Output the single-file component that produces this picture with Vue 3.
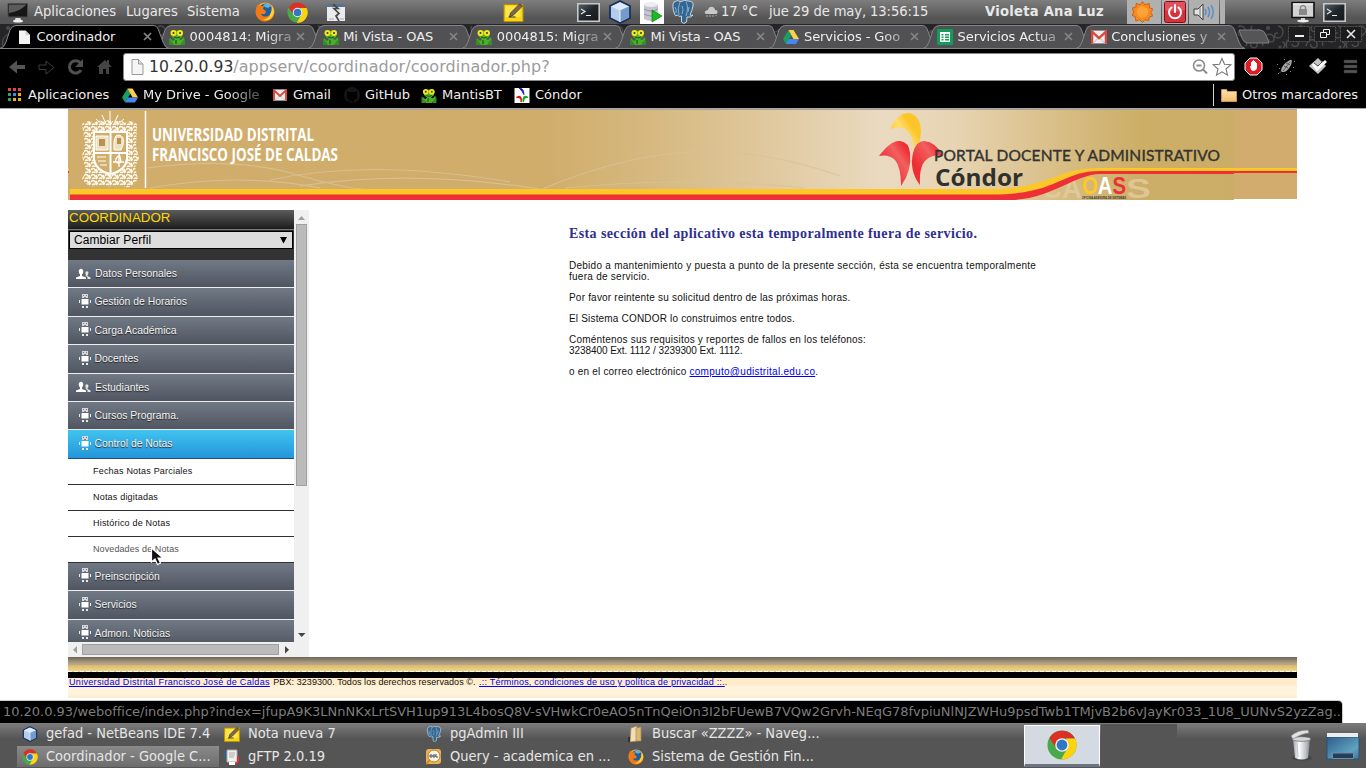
<script setup>
const tabs = [
  { icon: 'page', title: 'Coordinador', active: true },
  { icon: 'mantis', title: '0004814: Migra' , fade: true },
  { icon: 'mantis', title: 'Mi Vista - OAS' },
  { icon: 'mantis', title: '0004815: Migra', fade: true },
  { icon: 'mantis', title: 'Mi Vista - OAS' },
  { icon: 'drive', title: 'Servicios - Goo', fade: true },
  { icon: 'sheet', title: 'Servicios Actua', fade: true },
  { icon: 'gmail', title: 'Conclusiones y', fade: true },
]
const bookmarks = [
  { icon: 'apps', label: 'Aplicaciones', cls: 'b-apps' },
  { icon: 'drive', label: 'My Drive - Google', cls: 'b-drive', fade: true },
  { icon: 'gmail', label: 'Gmail', cls: 'b-gmail' },
  { icon: 'github', label: 'GitHub', cls: 'b-github' },
  { icon: 'mantis', label: 'MantisBT', cls: 'b-mantis' },
  { icon: 'condor', label: 'Cóndor', cls: 'b-condor' },
]
const menu = [
  { icon: 'people', label: 'Datos Personales' },
  { icon: 'robot', label: 'Gestión de Horarios' },
  { icon: 'robot', label: 'Carga Académica' },
  { icon: 'robot', label: 'Docentes' },
  { icon: 'people', label: 'Estudiantes' },
  { icon: 'robot', label: 'Cursos Programa.' },
  {
    icon: 'robot', label: 'Control de Notas', open: true,
    children: ['Fechas Notas Parciales', 'Notas digitadas', 'Histórico de Notas', 'Novedades de Notas'],
  },
  { icon: 'robot', label: 'Preinscripción' },
  { icon: 'robot', label: 'Servicios' },
  { icon: 'robot', label: 'Admon. Noticias' },
]
const tasks = [
  { icon: 'cube', label: 'gefad - NetBeans IDE 7.4' },
  { icon: 'note', label: 'Nota nueva 7' },
  { icon: 'elephant', label: 'pgAdmin III' },
  { icon: 'files', label: 'Buscar «ZZZZ» - Naveg...' },
  { icon: 'chrome', label: 'Coordinador - Google C...', active: true },
  { icon: 'gftp', label: 'gFTP 2.0.19' },
  { icon: 'sql', label: 'Query - academica en ...' },
  { icon: 'firefox', label: 'Sistema de Gestión Fin...' },
]
</script>

<template>
  <div class="screen">
    <svg class="defs" width="0" height="0" aria-hidden="true">
      <defs>
        <linearGradient id="g-fox" x1="0" y1="0" x2="0" y2="1"><stop offset="0" stop-color="#ffb52e" /><stop offset="1" stop-color="#e2510c" /></linearGradient>
        <linearGradient id="g-term" x1="0" y1="0" x2="1" y2="1"><stop offset="0" stop-color="#5a6269" /><stop offset=".5" stop-color="#20262b" /><stop offset="1" stop-color="#14181c" /></linearGradient>
        <linearGradient id="g-bin" x1="0" x2="1" y1="0" y2="0"><stop offset="0" stop-color="#9aa0a6" /><stop offset=".35" stop-color="#fff" /><stop offset=".7" stop-color="#c5c9ce" /><stop offset="1" stop-color="#858b92" /></linearGradient>
        <linearGradient id="g-desk" x1="0" x2="1" y1="0" y2="1"><stop offset="0" stop-color="#2c5b8e" /><stop offset=".7" stop-color="#5fa3bd" /><stop offset="1" stop-color="#3c74a2" /></linearGradient>
        <linearGradient id="g-folder" x1="0" x2="0" y1="0" y2="1"><stop offset="0" stop-color="#ffe3ae" /><stop offset="1" stop-color="#f0bd70" /></linearGradient>
        <pattern id="damask" width="60" height="26" patternUnits="userSpaceOnUse">
          <rect width="60" height="26" fill="#252527" />
          <g fill="none" stroke="#4a4a4c" stroke-width="1.4">
            <path d="M3 22C0 12 12 6 14 14c1 5-6 5-5 1M18 2c8 2 5 12 0 12s-4-6 0-5M27 24c-3-8 5-14 10-8s-4 9-5 4M38 3c5-3 10 3 6 7s-8-1-4-3M46 22c2-8 10-8 11-2s-8 4-6 0M52 2c-4 6 6 8 7 3M22 18c3 0 4 4 1 6" />
          </g>
          <g fill="#4a4a4c"><circle cx="8" cy="4" r="2" /><circle cx="31" cy="8" r="2" /><circle cx="50" cy="13" r="1.6" /><circle cx="20" cy="23" r="1.5" /></g>
        </pattern>
      </defs>
      <symbol id="i-monitor" viewBox="0 0 22 22"><path d="M1 2.500h19.500v13.500H1z" fill="#161616" stroke="#4c4c4c" /><path d="M2 3.500h17.500Q14 10 2 12z" fill="#5b5b5b" /><path d="M8.500 17h5l.5 2H8z" fill="#ddd" /><ellipse cx="11" cy="20" rx="5" ry="1.600" fill="#eee" /></symbol>
      <symbol id="i-firefox" viewBox="0 0 20 20"><circle cx="10" cy="10" r="9.500" fill="url(#g-fox)" /><circle cx="10.500" cy="8" r="6.500" fill="#1d5f9f" /><path d="M8 3q5-3 8 1l-3 2-3-1z" fill="#5fb3dd" /><path d="M1 6q1-2 2-4l2 2 4 0-1 3 3 2-1 3-4 0q1 4 6 3 5-2 5-9 4 7-1 11-7 5-12 0Q.5 13 1 6z" fill="#f07a16" /><path d="M17 4q4 6 0 11-3 4-9 3 9-2 9-14z" fill="#ffd23a" /></symbol>
      <symbol id="i-chrome" viewBox="0 0 30 30"><circle cx="15" cy="15" r="14.500" fill="#48a84a" /><path d="M2.500 8A14.500 14.500 0 0 1 28 8.500H15L9 18z" fill="#dc2f25" /><path d="M28 8.500A14.500 14.500 0 0 1 14 29.500L21 17l-2-8.500z" fill="#fdd20f" /><circle cx="15" cy="15" r="6.800" fill="#f1f3f5" /><circle cx="15" cy="15" r="5.400" fill="#2f78c4" /></symbol>
      <symbol id="i-torn" viewBox="0 0 18 17"><path d="M0 0h18v17H0z" fill="#e9ebee" /><path d="M0 0h18v3H0z" fill="#58728f" /><path d="M6 0l5 4.500H7l5 5-3 2.500 3 5" fill="none" stroke="#484848" stroke-width="1.700" /><path d="M2 15h5M13 15h4" stroke="#aaa" /></symbol>
      <symbol id="i-note" viewBox="0 0 20 20"><path d="M.5 2.500h19v17H.5z" fill="#f4d517" stroke="#bd8c00" /><path d="M2 4h15v11H2z" fill="#fbe54d" /><path d="M6 15l1-4 9-9 3 2-9 9z" fill="#7d684d" stroke="#44372a" stroke-width=".8" /><path d="M5 15h7" stroke="#333" /></symbol>
      <symbol id="i-term" viewBox="0 0 23 19"><path d="M.8.8h21.400v17.400H.8z" fill="url(#g-term)" stroke="#c8c8c8" stroke-width="1.600" /><path d="M4 6l4 2.500-4 2.500M9 12.500h5" fill="none" stroke="#e6ecf0" stroke-width="1.100" /></symbol>
      <symbol id="i-cube" viewBox="0 0 24 24"><path d="M12 1l10 5v12l-10 5-10-5V6z" fill="#b4cdeb" stroke="#17305c" stroke-width="1.800" /><path d="M3 6.500l9 4 9-4-9-4z" fill="#dceafa" /><path d="M12 10.500l9-4v11l-9 4.500z" fill="#759bcb" /><path d="M12 10.500V22" stroke="#eef5ff" /></symbol>
      <symbol id="i-db" viewBox="0 0 24 24"><path d="M0 0h24v24H0z" fill="#fff" /><path d="M4 4v15q7 4 14 0V4z" fill="#c4c5d0" /><ellipse cx="11" cy="4.500" rx="7" ry="2.500" fill="#ececf2" /><path d="M4 9q7 4 14 0M4 14q7 4 14 0" fill="none" stroke="#9394a5" /><path d="M12 10l10 6-10 6z" fill="#14bd22" stroke="#087c10" stroke-width=".7" /></symbol>
      <symbol id="i-elephant" viewBox="0 0 22 24"><path d="M2 2Q5-.5 9 1.500 13-.5 16 1q6 0 5 5-1 5-3 9 1 1 3 0-2 3-6 2l-.5 5q-3 3-5 0l0-6q-3 1-3 0l-1-1q-2 2-3-1Q-.5 5 2 2z" fill="#336791" stroke="#d4e2ef" stroke-width=".9" /><path d="M8 2q-3 6-1 13M14 2q3 5 0 14M10 6q2 3 0 8M17 7l-1 5M3 7q2 3 1 6" fill="none" stroke="#8fb4d2" stroke-width=".9" /></symbol>
      <symbol id="i-weather" viewBox="0 0 14 12"><path d="M3 8Q0 8 1 5.500 2 4 4 4q1-4 5-3 2 1 2 3 3 0 2.500 3-.5 1-2 1z" fill="#c9c9c9" /><path d="M3 9v2M6 9v2M9 9v2M12 9v1" stroke="#aaa" /></symbol>
      <symbol id="i-sun" viewBox="0 0 22 22"><path d="M11 0l2.500 3.500L18 2l.3 4.400L22 8l-2.500 3.300L22 15l-4 1.300L17.500 20 13.500 19 11 22l-3-3-4 1.500-.5-4.500L0 14.500 2 11 0 7l4-1.200L4.500 2 8.500 3.500z" fill="#f78b1f" stroke="#d45b05" /><circle cx="11" cy="11" r="6" fill="#ffa23a" /></symbol>
      <symbol id="i-power" viewBox="0 0 22 22"><rect x=".5" y=".5" width="21" height="21" rx="2" fill="#d7313c" stroke="#850c14" /><path d="M1 1h20v8Q11 12 1 9z" fill="#ea6870" opacity=".6" /><path d="M7.500 6.500a6 6 0 1 0 7 0M11 4v7" fill="none" stroke="#fff" stroke-width="2" stroke-linecap="round" /></symbol>
      <symbol id="i-sound" viewBox="0 0 22 20"><path d="M1 7h4l5-5v16l-5-5H1z" fill="#e3e3e3" stroke="#3c3c3c" /><path d="M7 5v10" stroke="#777" /><path d="M12 7q2 3 0 6M15 5q3 5 0 10M18 3q4.500 7 0 14" fill="none" stroke="#5b8fc6" stroke-width="1.500" /></symbol>
      <symbol id="i-lock" viewBox="0 0 24 22"><path d="M1 1.500h22v15H1z" fill="#d3d3d3" stroke="#111" stroke-width="1.600" /><path d="M2 2.500h20v1H2z" fill="#fff" /><path d="M8 8h8v6H8z" fill="#888" /><path d="M9.500 8V6q2.500-3 5 0v2" fill="none" stroke="#888" stroke-width="1.400" /><path d="M10 17h4v2h-4z" fill="#ccc" /><ellipse cx="12" cy="20" rx="6" ry="1.500" fill="#eee" /></symbol>
      <symbol id="i-page" viewBox="0 0 16 16"><path d="M3 1.500h6.500L14 6v9H3z" fill="#f3f3f3" /><path d="M9.500 1.500V6H14" fill="#ccc" /></symbol>
      <symbol id="i-pageline" viewBox="0 0 16 16"><path d="M3 .5h6.500L14 5v10.500H3z" fill="#f5f5f5" stroke="#999" /><path d="M9.500.5V5H14" fill="#e0e0e0" stroke="#999" /></symbol>
      <symbol id="i-mantis" viewBox="0 0 16 16"><path d="M2 4q6-5 12 0l-1 4-3 2 2 1 3-3v5l-4 3H5l-4-3V9l3 3 2-2-3-2z" fill="#4cae2c" /><circle cx="4.500" cy="4" r="3" fill="#f8e71c" /><circle cx="11" cy="4" r="3" fill="#f8e71c" /><circle cx="4.500" cy="4" r="1" fill="#333" /><circle cx="11" cy="4" r="1" fill="#333" /><path d="M5 8q3 2 6 0" fill="none" stroke="#145d10" /><path d="M0 9q2 3 4 5v2H0zM16 9q-2 3-4 5v2h4z" fill="#2f9026" /><path d="M7 11v4" stroke="#145d10" stroke-width="1.200" /></symbol>
      <symbol id="i-drive" viewBox="0 0 16 15"><path d="M5.500.5l3 5-5.500 9L0 9.500z" fill="#18a160" /><path d="M5.500.5h5l5.500 9h-5.500z" fill="#ffcf48" /><path d="M5.800 9.500H16l-3 5H3z" fill="#4687f4" /></symbol>
      <symbol id="i-sheet" viewBox="0 0 16 16"><rect width="16" height="16" rx="1" fill="#109d59" /><path d="M3 3h10v10H3z" fill="#fff" /><path d="M4.500 5h2v1.500h-2zM8 5h4v1.500H8zM4.500 7.500h2V9h-2zM8 7.500h4V9H8zM4.500 10h2v1.500h-2zM8 10h4v1.500H8z" fill="#109d59" /></symbol>
      <symbol id="i-gmail" viewBox="0 0 15 12"><path d="M0 0h15v12H0z" fill="#ededed" /><path d="M2 12l5.500-6 5.500 6" fill="none" stroke="#c9c9c9" /><path d="M1 12V1l6.500 6L14 1v11" fill="none" stroke="#d84a3e" stroke-width="2.200" /></symbol>
      <symbol id="i-apps" viewBox="0 0 14 14"><path d="M0 0h3v3H0zM5 0h3v3H5zM10 0h3v3h-3z" fill="#e8453c" /><path d="M0 5h3v3H0z" fill="#34a853" /><path d="M5 5h3v3H5z" fill="#4285f4" /><path d="M10 5h3v3h-3zM5 10h3v3H5zM10 10h3v3h-3z" fill="#fbab18" /><path d="M0 10h3v3H0z" fill="#34a853" /></symbol>
      <symbol id="i-github" viewBox="0 0 16 16"><circle cx="8" cy="8" r="8" fill="#151515" /><path d="M6 16v-3q-3 0-3-2M10 16v-3q4-1 3-5V4l-2 1H5L3 4v4q-1 4 3 5" fill="#000" /></symbol>
      <symbol id="i-condor" viewBox="0 0 16 16"><path d="M0 0h16v16H0z" fill="#fff" /><path d="M5 0q5 0 5 7Q9 4 5 0z" fill="#1414c8" stroke="#1414c8" /><path d="M7 15q1-6-5-5l3-1q3 1 2 6z" fill="#d11" stroke="#d11" stroke-width="1.500" /><path d="M9.500 15q0-6 5-5l-3-1q-3 1-2 6z" fill="#18a524" stroke="#18a524" stroke-width="1.500" /></symbol>
      <symbol id="i-people" viewBox="0 0 15 12"><path d="M3 2Q5-.5 7 2q.8 3-1 4.500V8l4 1.500V11H0V9.500L4 8V6.500Q2.200 5 3 2z" fill="#fff" /><path d="M9.500 4q1.500-1.500 2.800 0 .5 2-.8 3v1L14.500 9.500V11h-3V9L9.500 8l.5-1Q9 5.500 9.500 4z" fill="#e6e7e9" /></symbol>
      <symbol id="i-robot" viewBox="0 0 12 14"><path d="M3 0h6v4H3z" fill="#d5d8dc" /><path d="M4 1h1v1H4zM7 1h1v1H7zM5 3h2v1H5z" fill="#7c828b" /><path d="M2.500 5h7v5.500h-7z" fill="#fff" /><path d="M0 6h1v3H0zM11 6h1v3h-1zM3 12h2v2H3zM7 12h2v2H7z" fill="#e8eaec" /></symbol>
      <symbol id="i-files" viewBox="0 0 16 16"><path d="M3 2l6-2v15l-7 1z" fill="#f3ddb4" stroke="#a98950" stroke-width=".7" /><path d="M8 2l5-1v14H8z" fill="#dcb876" stroke="#a98950" stroke-width=".7" /><path d="M0 11h2v5H0z" fill="#333" /></symbol>
      <symbol id="i-gftp" viewBox="0 0 16 16"><path d="M3 1h10v12H3z" fill="#f1f1f1" stroke="#aaa" /><path d="M5 4h6M5 6h6M5 8h5" stroke="#aaa" /><path d="M1 2v8" stroke="#395d87" stroke-width="2" /><path d="M14 7v6l-3 2" fill="none" stroke="#d73636" stroke-width="2" /><path d="M5 13h6v3H5z" fill="#fff" /></symbol>
      <symbol id="i-sql" viewBox="0 0 16 16"><rect width="15" height="15" rx="3" fill="#f0b44c" /><circle cx="8" cy="7" r="6" fill="#f6f2e8" stroke="#b58034" /><path d="M4 6h2v2H4zM7 6h2v2H7zM10 5v3h2" fill="none" stroke="#555" /><path d="M4 11l-4 4" stroke="#d88b22" stroke-width="2" /></symbol>
      <symbol id="i-folder" viewBox="0 0 16 13"><path d="M.5.5h5l1 2h9v10H.5z" fill="url(#g-folder)" stroke="#c9974f" /></symbol>
    </svg>

    <header class="panel">
      <svg class="ic p-monitor"><use href="#i-monitor" /></svg>
      <span class="p-m1">Aplicaciones</span><span class="p-m2">Lugares</span><span class="p-m3">Sistema</span>
      <svg class="ic p-fox"><use href="#i-firefox" /></svg>
      <svg class="ic p-chrome"><use href="#i-chrome" /></svg>
      <svg class="ic p-torn"><use href="#i-torn" /></svg>
      <svg class="ic p-note"><use href="#i-note" /></svg>
      <svg class="ic p-term"><use href="#i-term" /></svg>
      <svg class="ic p-cube"><use href="#i-cube" /></svg>
      <svg class="ic p-db"><use href="#i-db" /></svg>
      <svg class="ic p-eleph"><use href="#i-elephant" /></svg>
      <svg class="ic p-weather"><use href="#i-weather" /></svg>
      <span class="p-temp">17 °C</span>
      <span class="p-date">jue 29 de may, 13:56:15</span>
      <b class="p-user">Violeta Ana Luz</b>
      <div class="tray">
        <i><svg class="ic t-sun"><use href="#i-sun" /></svg></i>
        <i><svg class="ic t-pow"><use href="#i-power" /></svg></i>
        <i><svg class="ic t-snd"><use href="#i-sound" /></svg></i>
        <i></i>
      </div>
      <svg class="ic p-lock"><use href="#i-lock" /></svg>
      <svg class="ic p-term2"><use href="#i-term" /></svg>
    </header>

    <div class="strip">
      <svg class="damask"><rect width="1366" height="25" fill="url(#damask)" /></svg>
      <div v-for="(t, i) in tabs" :key="i" class="tab" :class="{ active: t.active }">
        <svg class="shape" width="172" height="25" viewBox="0 0 172 25">
          <path d="M0 24.500Q4 24 6 18L10 6Q12 1.500 16 1.500H153Q157 1.500 158.500 6L163 18Q165 24 169 24.500z" />
        </svg>
        <svg class="fav"><use :href="'#i-' + t.icon" /></svg>
        <span class="title" :class="{ fade: t.fade }">{{ t.title }}</span>
        <svg class="x" viewBox="0 0 9 9"><path d="M1 1l7 7M8 1l-7 7" /></svg>
      </div>
      <svg class="newtab" width="32" height="15" viewBox="0 0 32 15"><path d="M1 1h21q4 0 6 5l3 8H9q-3 0-5-5z" fill="#555557" stroke="#808082" /></svg>
      <div class="wins">
        <svg viewBox="0 0 22 16"><path class="fr" d="M.5.500h21v15H.5z" /><path d="M7 10h9" stroke-width="2" /></svg>
        <svg viewBox="0 0 22 16"><path class="fr" d="M.5.500h21v15H.5z" /><path d="M6.500 6.500h6v5h-6zM9.500 6V3.500h6v5h-3" /></svg>
        <svg viewBox="0 0 22 16"><path class="fr" d="M.5.500h21v15H.5z" /><path d="M7 4l8 8M15 4l-8 8" stroke-width="1.500" /></svg>
      </div>
    </div>

    <div class="toolbar">
      <svg class="nav" width="123" height="33" viewBox="0 0 123 33">
        <path d="M9 18l8-6.500v4.500h8v4h-8v4.500z" fill="#555" />
        <path d="M39 16h7v-4l8 6.500-8 6.500v-4.500h-7z" fill="none" stroke="#3c3c3c" />
        <path d="M80.500 14a6.200 6.200 0 1 0 .5 7" fill="none" stroke="#505050" stroke-width="3" /><path d="M83 10v8h-8z" fill="#505050" />
        <path d="M97 18l8-7 2 2v-2h2v4l3 3h-3v7h-3v-5h-3v5h-4v-7z" fill="#444" />
      </svg>
      <div class="url">
        <svg class="upage"><use href="#i-pageline" /></svg>
        <span class="addr">10.20.0.93<em>/appserv/coordinador/coordinador.php?</em></span>
        <svg class="uicons" width="42" height="20" viewBox="0 0 42 20">
          <circle cx="8" cy="8.500" r="5.500" fill="none" stroke="#8d8d8d" stroke-width="1.600" /><path d="M5.500 8.500h5M12 12.500l4 4" stroke="#8d8d8d" stroke-width="2" />
          <path d="M31 1.500l2.500 5.800 6.300.5-4.800 4.200 1.500 6.200-5.500-3.300-5.500 3.300 1.500-6.200-4.800-4.200 6.300-.5z" fill="#fff" stroke="#777" stroke-width="1.100" />
        </svg>
      </div>
      <svg class="exts" width="131" height="33" viewBox="0 0 131 33">
        <path d="M15 9h7l5 5v7l-5 5h-7l-5-5v-7z" fill="#e01b22" stroke="#fff" /><path d="M14.500 17l1.500 0v-4h1v-1h1v-1h1v1h1v1h1v1l1 0v5q-1 3-4 3-2 0-3-5z" fill="#fff" />
        <path d="M46 22q0-6 9-11 3-1 1 5-4 8-9 7z" fill="#a8a8a8" /><path d="M48 22l7-9M44.500 24l2-2M49 17l4 2M51 14l4 2" stroke="#555" /><g fill="#8a8a8a"><path d="M42 15h1v1h-1zM44 19h1v1h-1zM49 10h1v1h-1zM59 12h1v1h-1zM58 18h1v1h-1zM55 22h1v1h-1zM43 24h1v1h-1zM51 25h1v1h-1z" /></g>
        <path d="M74 17l9-8 8 8-8 8z" fill="#c7c7c7" /><path d="M78 15l4 5 9-8" fill="none" stroke="#fff" stroke-width="3" /><path d="M79 14l4 3 5-5" fill="none" stroke="#555" />
        <path d="M109 11h13v3h-13zM109 16h13v3h-13zM109 21h13v3h-13z" fill="#555" stroke="#2d2d2d" stroke-width=".5" />
      </svg>
    </div>

    <div class="marks">
      <div v-for="b in bookmarks" :key="b.label" class="mark" :class="b.cls">
        <svg><use :href="'#i-' + b.icon" /></svg><span :class="{ fade: b.fade }">{{ b.label }}</span>
      </div>
      <div class="mark others"><svg><use href="#i-folder" /></svg><span>Otros marcadores</span></div>
    </div>

    <main class="page">
      <svg class="banner" width="1229" height="91" viewBox="68 109 1229 91">
        <defs>
          <linearGradient id="g-ban" gradientUnits="userSpaceOnUse" x1="68" x2="1234" y1="0" y2="0">
            <stop offset="0" stop-color="#d0ad6b" /><stop offset=".41" stop-color="#d0ad6b" /><stop offset=".5" stop-color="#d6b980" /><stop offset=".59" stop-color="#dfc79b" /><stop offset=".7" stop-color="#eadac0" /><stop offset=".76" stop-color="#e7d4b2" /><stop offset=".84" stop-color="#dac08a" /><stop offset=".92" stop-color="#ccae67" /><stop offset="1" stop-color="#ccad68" />
          </linearGradient>
          <linearGradient id="g-yel" x1="0" x2="1" y1="1" y2="0"><stop offset=".2" stop-color="#ffcb27" /><stop offset=".52" stop-color="#fddc6a" /><stop offset=".7" stop-color="#fcc628" /></linearGradient>
          <linearGradient id="g-red" x1="0" x2="1" y1="1" y2="0"><stop offset=".3" stop-color="#ee2e35" /><stop offset=".65" stop-color="#f2605f" /><stop offset=".85" stop-color="#ee2e35" /></linearGradient>
          <pattern id="lace" width="7" height="6" patternUnits="userSpaceOnUse"><path d="M0 2q2-3 4 0t3 1M1 5q2-2 3 0M5 1q2 2 0 4" fill="none" stroke="#fffaf0" stroke-width="1.500" /></pattern>
        </defs>
        <path d="M68 109h1166v91H68z" fill="url(#g-ban)" />
        <path d="M1234 109h63v90h-63z" fill="#d2ac6e" />
        <g fill="none" stroke="#d9c29a" stroke-width="1.200" opacity=".8">
          <path d="M148 168q85-12 150 7t90 14M150 188q90-16 170 0M270 180q100-22 240 2M300 186q110-17 240 3M540 190q80-34 150-38t150 24M565 188q120-12 240 0" />
        </g>
        <path d="M82 124q6-5 12-1 5-4 10-1 5-4 10 0 6-3 11 1 6-4 12 1l-1 22 3 12-4 9 3 12q-6 10-14 8-6-4-14 0-8-4-13-1-9 2-15-7l4-9-4-14 3-12z" fill="url(#lace)" />
        <g stroke="#fff" stroke-width="1"><path d="M110 111v16M102 115l4 9M118 115l-4 9M96 119l7 6M124 119l-7 6" /></g>
        <path d="M94 132h33v27q-2 12-16.500 15Q96 171 94 159z" fill="#d0ad6b" stroke="#fff" stroke-width="2" />
        <path d="M110.500 132v41M94 153h33" stroke="#fff" stroke-width="2" />
        <path d="M96 136h12v14H96zM114 150q-1-15 4-15 7 0 5 10l-2 5zM97 157h9M98 161h8M100 165h7" fill="#eee0c2" stroke="#fff" />
        <path d="M99 139h6v7h-6zM117 138h4v6h-4z" fill="#b9934e" />
        <path d="M118 156q-5 6 0 7t1-9v13M113 162h11" fill="none" stroke="#fff" stroke-width="1.300" />
        <path d="M145.500 111v77" stroke="#fff" stroke-width="1.500" />
        <g class="udis"><text x="152" y="141" textLength="162" lengthAdjust="spacingAndGlyphs">UNIVERSIDAD DISTRITAL</text><text x="152" y="161" textLength="186" lengthAdjust="spacingAndGlyphs">FRANCISCO JOSÉ DE CALDAS</text></g>
        <g class="oasbig"><text x="1042" y="198" textLength="40" lengthAdjust="spacingAndGlyphs">CA</text><text x="1126" y="198" textLength="25" lengthAdjust="spacingAndGlyphs">S</text></g>
        <path d="M70 189h920c60 0 65-21 110-21h134v3h-134c-40 0-40 24-100 24H70z" fill="#fdc827" />
        <path d="M70 194.500h920c70 0 70-23.500 110-23.500h134v3h-134c-25 0-50 26-90 26H70z" fill="#ee2f35" />
        <path d="M1234 168h63v3h-63z" fill="#fdc827" /><path d="M1234 171h63v2h-63z" fill="#ee2f35" />
        <path d="M68 168h1v3h-1z" fill="#fdc827" /><path d="M68 171h1v2h-1z" fill="#ee2f35" />
        <path d="M890 129Q898 112 910 113q11 4 11 19-1 11-7 25 1-22-9-28-7-3-15 0z" fill="url(#g-yel)" />
        <path d="M879 156q12-16 21-15 9 1 10 12 2 18-9 33 0-19-6-26-6-6-16-4z" fill="url(#g-red)" />
        <path d="M943 156q-7-14-19-15-8 0-11 12-4 18 7 32-1-19 6-25 6-6 17-4z" fill="url(#g-red)" />
        <text class="portal" x="934" y="161" textLength="286" lengthAdjust="spacing">PORTAL DOCENTE Y ADMINISTRATIVO</text>
        <text class="condor" x="935" y="186" textLength="88" lengthAdjust="spacingAndGlyphs">Cóndor</text>
        <text class="oas" x="1082" y="194" textLength="44" lengthAdjust="spacingAndGlyphs"><tspan fill="#ffc824">O</tspan><tspan fill="#fff">A</tspan><tspan fill="#ee2f35">S</tspan></text>
        <text class="oasub" x="1082" y="199" textLength="44" lengthAdjust="spacingAndGlyphs">OFICINA ASESORA DE SISTEMAS</text>
        <path d="M68 109h1229v1H68z" fill="#a9a297" />
      </svg>

      <div class="body">
        <aside class="frame">
          <div class="side">
            <div class="role">COORDINADOR</div>
            <div class="selwrap"><div class="sel"><span>Cambiar Perfil</span><svg width="7" height="7" viewBox="0 0 8 8"><path d="M0 0h8L4 7.500z" /></svg></div></div>
            <template v-for="m in menu" :key="m.label">
              <div class="item" :class="[m.icon, { open: m.open }]"><svg><use :href="'#i-' + m.icon" /></svg><span>{{ m.label }}</span></div>
              <div v-for="c in m.children" :key="c" class="sub" :class="{ hover: c === 'Novedades de Notas' }">{{ c }}</div>
            </template>
          </div>
          <div class="vbar"><svg width="15" height="14" viewBox="0 0 15 14"><path d="M4 10l3.500-4L11 10z" fill="#a0a0a0" /></svg><i></i><svg class="dn" width="15" height="15" viewBox="0 0 15 15"><path d="M4 6h7.500L7.700 10z" fill="#444" /></svg></div>
          <div class="hbar"><svg width="14" height="15" viewBox="0 0 14 15"><path d="M9 4v7.500L5 7.700z" fill="#a0a0a0" /></svg><i></i><svg width="15" height="15" viewBox="0 0 15 15"><path d="M6 4l4 3.700-4 3.800z" fill="#444" /></svg></div>
        </aside>
        <section class="content">
          <h1>Esta sección del aplicativo esta temporalmente fuera de servicio.</h1>
          <p class="l1">Debido a mantenimiento y puesta a punto de la presente sección, ésta se encuentra temporalmente<br>fuera de servicio.</p>
          <p class="l2">Por favor reintente su solicitud dentro de las próximas horas.</p>
          <p class="l3">El Sistema CONDOR lo construimos entre todos.</p>
          <p class="l4">Coméntenos sus requisitos y reportes de fallos en los teléfonos:<br><span>3238400 Ext. 1112 / 3239300 Ext. 1112.</span></p>
          <p class="l5">o en el correo electrónico <a>computo@udistrital.edu.co</a>.</p>
        </section>
      </div>
      <footer class="foot">
        <div class="goldbar"></div><div class="dash"></div><div class="black"></div>
        <div class="legal"><a class="f1">Universidad Distrital Francisco José de Caldas</a><span class="f2">PBX: 3239300. Todos los derechos reservados ©.</span><a class="f3">.:: Términos, condiciones de uso y política de privacidad ::.</a><span>.</span></div>
      </footer>
      <svg class="cursor" width="16" height="20" viewBox="0 0 16 20"><path d="M1.500 1v14l3.500-3 2.500 5.500 3-1.500-2.500-5H13z" fill="#111" stroke="#fff" stroke-width="1.200" /></svg>
      <div class="status"><span>10.20.0.93/weboffice/index.php?index=jfupA9K3LNnNKxLrtSVH1up913L4bosQ8V-sVHwkCr0eAO5nTnQeiOn3I2bFUewB7VQw2Grvh-NEqG78fvpiuNlNJZWHu9psdTwb1TMjvB2b6vJayKr033_1U8_UUNvS2yzZag..</span></div>
    </main>

    <div class="taskbar">
      <div class="tasks">
        <div v-for="t in tasks" :key="t.label" class="task" :class="{ active: t.active }"><svg><use :href="'#i-' + t.icon" /></svg><span>{{ t.label }}</span></div>
      </div>
      <div class="ws on"><svg><use href="#i-chrome" /></svg></div>
      <div class="ws off"></div>
      <svg class="bin" width="24" height="32" viewBox="0 0 24 32"><ellipse cx="13" cy="29" rx="10" ry="2.500" fill="#333" opacity=".5" /><path d="M4 10h17l-2 19q-6 3-13 0z" fill="url(#g-bin)" /><path d="M8 13l1 15M17 13l-1 15" stroke="#c4c9cf" /><ellipse cx="12.500" cy="10" rx="9.500" ry="2.300" fill="#d4d6d8" stroke="#666" stroke-width=".7" /><path d="M2 7q6-6 17-6l1 3Q14 4 4 10z" fill="#dfe2e5" stroke="#888" stroke-width=".7" /></svg>
      <svg class="desk" width="34" height="28" viewBox="0 0 34 28"><path d="M1 4h32v22H1z" fill="url(#g-desk)" stroke="#2a527d" /><path d="M1 0h31v4H1z" fill="#ededed" /><path d="M6.500 20h21v5.500h-21z" fill="#263e56" stroke="#6c90ac" /></svg>
    </div>
  </div>
</template>

<style>
html, body { margin: 0; overflow: hidden; background: #fff; }
</style>

<style scoped>
.screen { width: 1366px; height: 768px; display: flex; flex-direction: column; overflow: hidden; position: relative; font-family: "DejaVu Sans", sans-serif; background: #fff; }
.defs { position: absolute; }
svg { display: block; flex: none; }
span, b { white-space: nowrap; }

.panel { height: 24px; flex: none; display: flex; align-items: center; background: linear-gradient(#7e7e7e, #555 75%); color: #e8e8e8; font: 14.6px/22px "DejaVu Sans Condensed", "DejaVu Sans", sans-serif; font-stretch: condensed; }
.panel > * { flex: none; }
.panel > span, .panel > b { padding-bottom: 2px; }
.p-monitor { width: 22px; height: 22px; margin-left: 7px; }
.p-m1 { width: 92px; margin-left: 5px; }
.p-m2 { width: 61px; }
.p-m3 { width: 68px; }
.p-fox { width: 20px; height: 20px; }
.p-chrome { width: 21px; height: 21px; margin-left: 12px; }
.p-torn { width: 18px; height: 17px; margin-left: 19px; }
.p-note { width: 21px; height: 20px; margin-left: 158px; }
.p-term { width: 23px; height: 19px; margin-left: 53px; }
.p-cube { width: 24px; height: 24px; margin-left: 8px; }
.p-db { width: 24px; height: 24px; margin-left: 8px; }
.p-eleph { width: 22px; height: 24px; margin-left: 8px; }
.p-weather { width: 14px; height: 12px; margin-left: 10px; }
.p-temp { width: 48px; margin-left: 3px; }
.p-date { width: 216px; letter-spacing: -.1px; }
.p-user { width: 142px; font-weight: bold; letter-spacing: .27px; }
.tray { display: flex; height: 24px; }
.tray i { background: #b0b0b0; height: 24px; margin-right: 1px; display: flex; align-items: center; justify-content: center; width: 34px; }
.tray i:nth-child(2) { width: 26px; }
.tray i:nth-child(3) { width: 30px; }
.tray i:nth-child(4) { width: 5px; }
.t-sun { width: 21px; height: 22px; margin-right: 4px; }
.t-pow { width: 22px; height: 22px; }
.t-snd { width: 22px; height: 20px; }
.p-lock { width: 24px; height: 22px; margin-left: 65px; }
.p-term2 { width: 23px; height: 19px; margin-left: 8px; }

.strip { height: 25px; flex: none; display: flex; position: relative; background: #252527; border-bottom: 1px solid #1b1b1b; box-sizing: border-box; }
.damask { position: absolute; left: 0; top: 0; width: 1366px; height: 25px; }
.tab { position: relative; width: 153.600px; flex: none; display: flex; align-items: center; height: 25px; box-sizing: border-box; padding-left: 16px; }
.tab:first-child, .tab:nth-child(2) { z-index: 2; }
.tab:nth-child(n+3) { padding-left: 15.500px; }
.shape { position: absolute; left: 0; top: 0; }
.tab:nth-child(n+3) .shape { left: 1px; }
.shape path { fill: #515153; stroke: #858587; stroke-width: 1; }
.tab.active .shape path { fill: #000; }
.fav { width: 16px; height: 16px; position: relative; margin-right: 4.500px; }
.title { position: relative; color: #eee; font-size: 13px; line-height: 24px; flex: none; width: 106px; letter-spacing: -.08px; }
.fade { -webkit-mask-image: linear-gradient(90deg, #000 72%, rgba(0,0,0,.4) 94%); mask-image: linear-gradient(90deg, #000 72%, rgba(0,0,0,.4) 94%); }
.x { position: relative; width: 9px; height: 9px; }
.x path { stroke: #858585; stroke-width: 1.700; }
.newtab { margin: 5px 0 0 9px; position: relative; }
.wins { position: absolute; left: 1288px; top: 2px; display: flex; gap: 4px; }
.wins svg { width: 22px; height: 16px; }
.wins path { fill: none; stroke: #eee; }
.wins .fr { stroke: #555; fill: #1c1c1c; stroke-dasharray: 2 1; }

.toolbar { height: 33px; flex: none; background: #000; display: flex; }
.url { width: 1112px; height: 28px; box-sizing: border-box; margin-top: 4px; border: 1px solid #888; border-radius: 3px; background: #fff; display: flex; align-items: center; padding-left: 5px; }
.upage { width: 16px; height: 16px; margin-right: 4px; }
.addr { color: #333; font-size: 15.600px; line-height: 24px; width: 1042px; }
.addr em { font-style: normal; color: #9b9b9b; font-size: 16px; letter-spacing: .05px; }

.marks { height: 26px; flex: none; background: #000; display: flex; align-items: center; color: #eee; font-size: 13px; position: relative; }
.mark { display: flex; align-items: center; flex: none; line-height: 24px; }
.mark svg { width: 16px; height: 15px; margin-right: 5px; }
.b-apps { width: 114px; padding-left: 8px; }
.b-apps svg { width: 14px; height: 14px; margin-right: 6px; }
.b-drive { width: 151px; }
.b-gmail { width: 71px; }
.b-gmail svg { width: 14px; height: 12px; margin-right: 6px; }
.b-github { width: 77px; }
.b-github svg { width: 16px; height: 16px; margin-right: 5px; }
.b-mantis { width: 93px; }
.others { margin-left: auto; border-left: 1px solid #cfd3da; padding-left: 7px; height: 22px; width: 145px; }

.page { height: 615px; flex: none; position: relative; background: #fff; border-top: 1px solid #a9a9a9; box-sizing: border-box; overflow: hidden; }
.banner { margin-left: 68px; }
.udis { font: bold 18px "Open Sans", "Liberation Sans", sans-serif; fill: #fff; }
.portal { font: 15.500px Lato, "Liberation Sans", sans-serif; fill: #333331; stroke: #333331; stroke-width: .4; }
.condor { font: bold 24px "Open Sans", "Liberation Sans", sans-serif; fill: #30302e; }
.oasbig { font: bold 28px "Liberation Sans", sans-serif; fill: #e2cda0; opacity: .8; }
.oas { font: bold 23px "Liberation Sans", sans-serif; }
.oasub { font: bold 3.500px "Liberation Sans", sans-serif; fill: #333; }
.body { display: flex; margin: 10px 69px 0 68px; height: 447px; }
.frame { width: 241px; height: 447px; display: grid; grid-template: 432px 15px / 226px 15px; font-family: "Liberation Sans", sans-serif; background: #f0f0f0; }
.side { overflow: hidden; background: #333; }
.role { height: 19px; box-sizing: border-box; padding-left: 1px; font-size: 13.330px; line-height: 16px; color: #ffd800; background: linear-gradient(#5c5c5c, #1c1c1c); }
.selwrap { height: 31px; box-sizing: border-box; border-top: 1px solid #777; padding: 1px 1px 0; }
.sel { height: 18px; box-sizing: border-box; border: 1px solid #000; background: #ddd; display: flex; align-items: center; justify-content: space-between; padding: 0 5px 0 4px; font-size: 12px; color: #000; letter-spacing: .08px; }
.item { height: 28.400px; box-sizing: border-box; border-bottom: 1px solid #eee; background: linear-gradient(#717985, #4f5661); display: flex; align-items: center; color: #f4f4f4; font-size: 10.400px; text-shadow: 0 1px 1px #222; padding-left: 8px; }
.item svg { width: 15px; height: 12px; margin-right: 4px; }
.item.robot { padding-left: 11px; }
.item.robot svg { width: 12px; height: 14px; margin: -2px 3.500px 0 0; }
.item span { padding-bottom: .400px; }
.item.open { background: linear-gradient(#41c4ee, #2495dc); border-bottom-color: #1d4f7c; }
.sub { height: 26px; box-sizing: border-box; border-bottom: 1px solid #2e3036; background: #fff; color: #111; font-size: 9px; line-height: 24px; padding-left: 25px; letter-spacing: .2px; }
.sub.hover { color: #555; letter-spacing: .1px; }
.vbar { display: flex; flex-direction: column; }
.vbar i { width: 9px; height: 260px; margin-left: 2px; border: 1px solid #a0a0a0; background: #bbb; }
.dn { margin-top: auto; }
.hbar { display: flex; }
.hbar i { width: 195px; height: 9px; margin-top: 2px; border: 1px solid #a0a0a0; background: #bbb; }
.content { margin-left: 260px; padding-top: 16px; width: 560px; font: 10px/11px "Liberation Sans", sans-serif; color: #111; }
h1 { margin: 0 0 18px; font: bold 14px/16px "Liberation Serif", serif; color: #2f2f8f; letter-spacing: .39px; white-space: nowrap; }
p { margin: 0 0 10px; white-space: nowrap; }
.l1 { letter-spacing: .26px; }
.l2 { letter-spacing: .2px; }
.l3 { letter-spacing: .18px; }
.l4 { letter-spacing: .21px; }
.l4 span { letter-spacing: -.07px; }
.l5 { letter-spacing: .2px; }
.l5 a { letter-spacing: .29px; }
a { color: #00e; text-decoration: underline; }
.foot { margin: 0 69px 0 68px; height: 41px; background: linear-gradient(#feecca, #feecca 65%, #fff3dc 75%, #fff3dc 90%, #fdebcb); }
.goldbar { height: 14px; background: linear-gradient(#6e6656, #8c8069 20%, #a99d86 40%, #b9a888 55%, #dcb968 60%, #f1d68b); }
.dash { height: 1px; background: repeating-linear-gradient(90deg, #fff 0 4px, #e8cf95 4px 6px); }
.black { height: 6px; background: #000; }
.legal { display: flex; font: 9px/9px "Liberation Sans", sans-serif; color: #111; padding: 0 0 0 1px; }
.legal > * { flex: none; white-space: nowrap; }
.f1 { letter-spacing: .32px; margin-right: 3.500px; }
.f2 { letter-spacing: .07px; margin-right: 3.500px; }
.f3 { letter-spacing: .2px; }
.cursor { position: absolute; left: 150px; top: 438px; }
.status { position: absolute; left: 0; bottom: 0; width: 1342px; height: 22px; box-sizing: border-box; background: #000; border-top-right-radius: 4px; box-shadow: 0 0 0 1px #ccc; padding-left: 3px; color: #7d7d7d; font-size: 13px; line-height: 21px; letter-spacing: -.02px; overflow: hidden; }

.taskbar { height: 45px; flex: none; background: linear-gradient(#7c7c7c, #555 35%); display: flex; position: relative; color: #e6e6e6; font: 14.500px/20px "DejaVu Sans Condensed", "DejaVu Sans", sans-serif; font-stretch: condensed; }
.tasks { display: grid; grid-template: 22px 21px / repeat(4, 202px); width: 808px; margin-left: 17px; row-gap: 1px; flex: none; }
.task { display: flex; align-items: center; padding-left: 5px; }
.task svg { width: 16px; height: 16px; margin-right: 8px; }
.task span { padding-bottom: 2px; }
.task.active { background: linear-gradient(#8a8a8a, #6c6c6c); }
.ws { width: 76px; box-sizing: border-box; flex: none; }
.ws.on { margin: 2px 0 0 199px; height: 42px; background: #d3dae2; border: 1px solid #fff; border-bottom: 3px solid #6a7482; display: flex; align-items: center; justify-content: center; }
.ws.on svg { width: 30px; height: 30px; }
.ws.off { margin-left: 1px; background: #555; margin-top: 1px; }
.bin { margin: 6px 0 0 112px; }
.desk { margin: 10px 0 0 13px; }
</style>
